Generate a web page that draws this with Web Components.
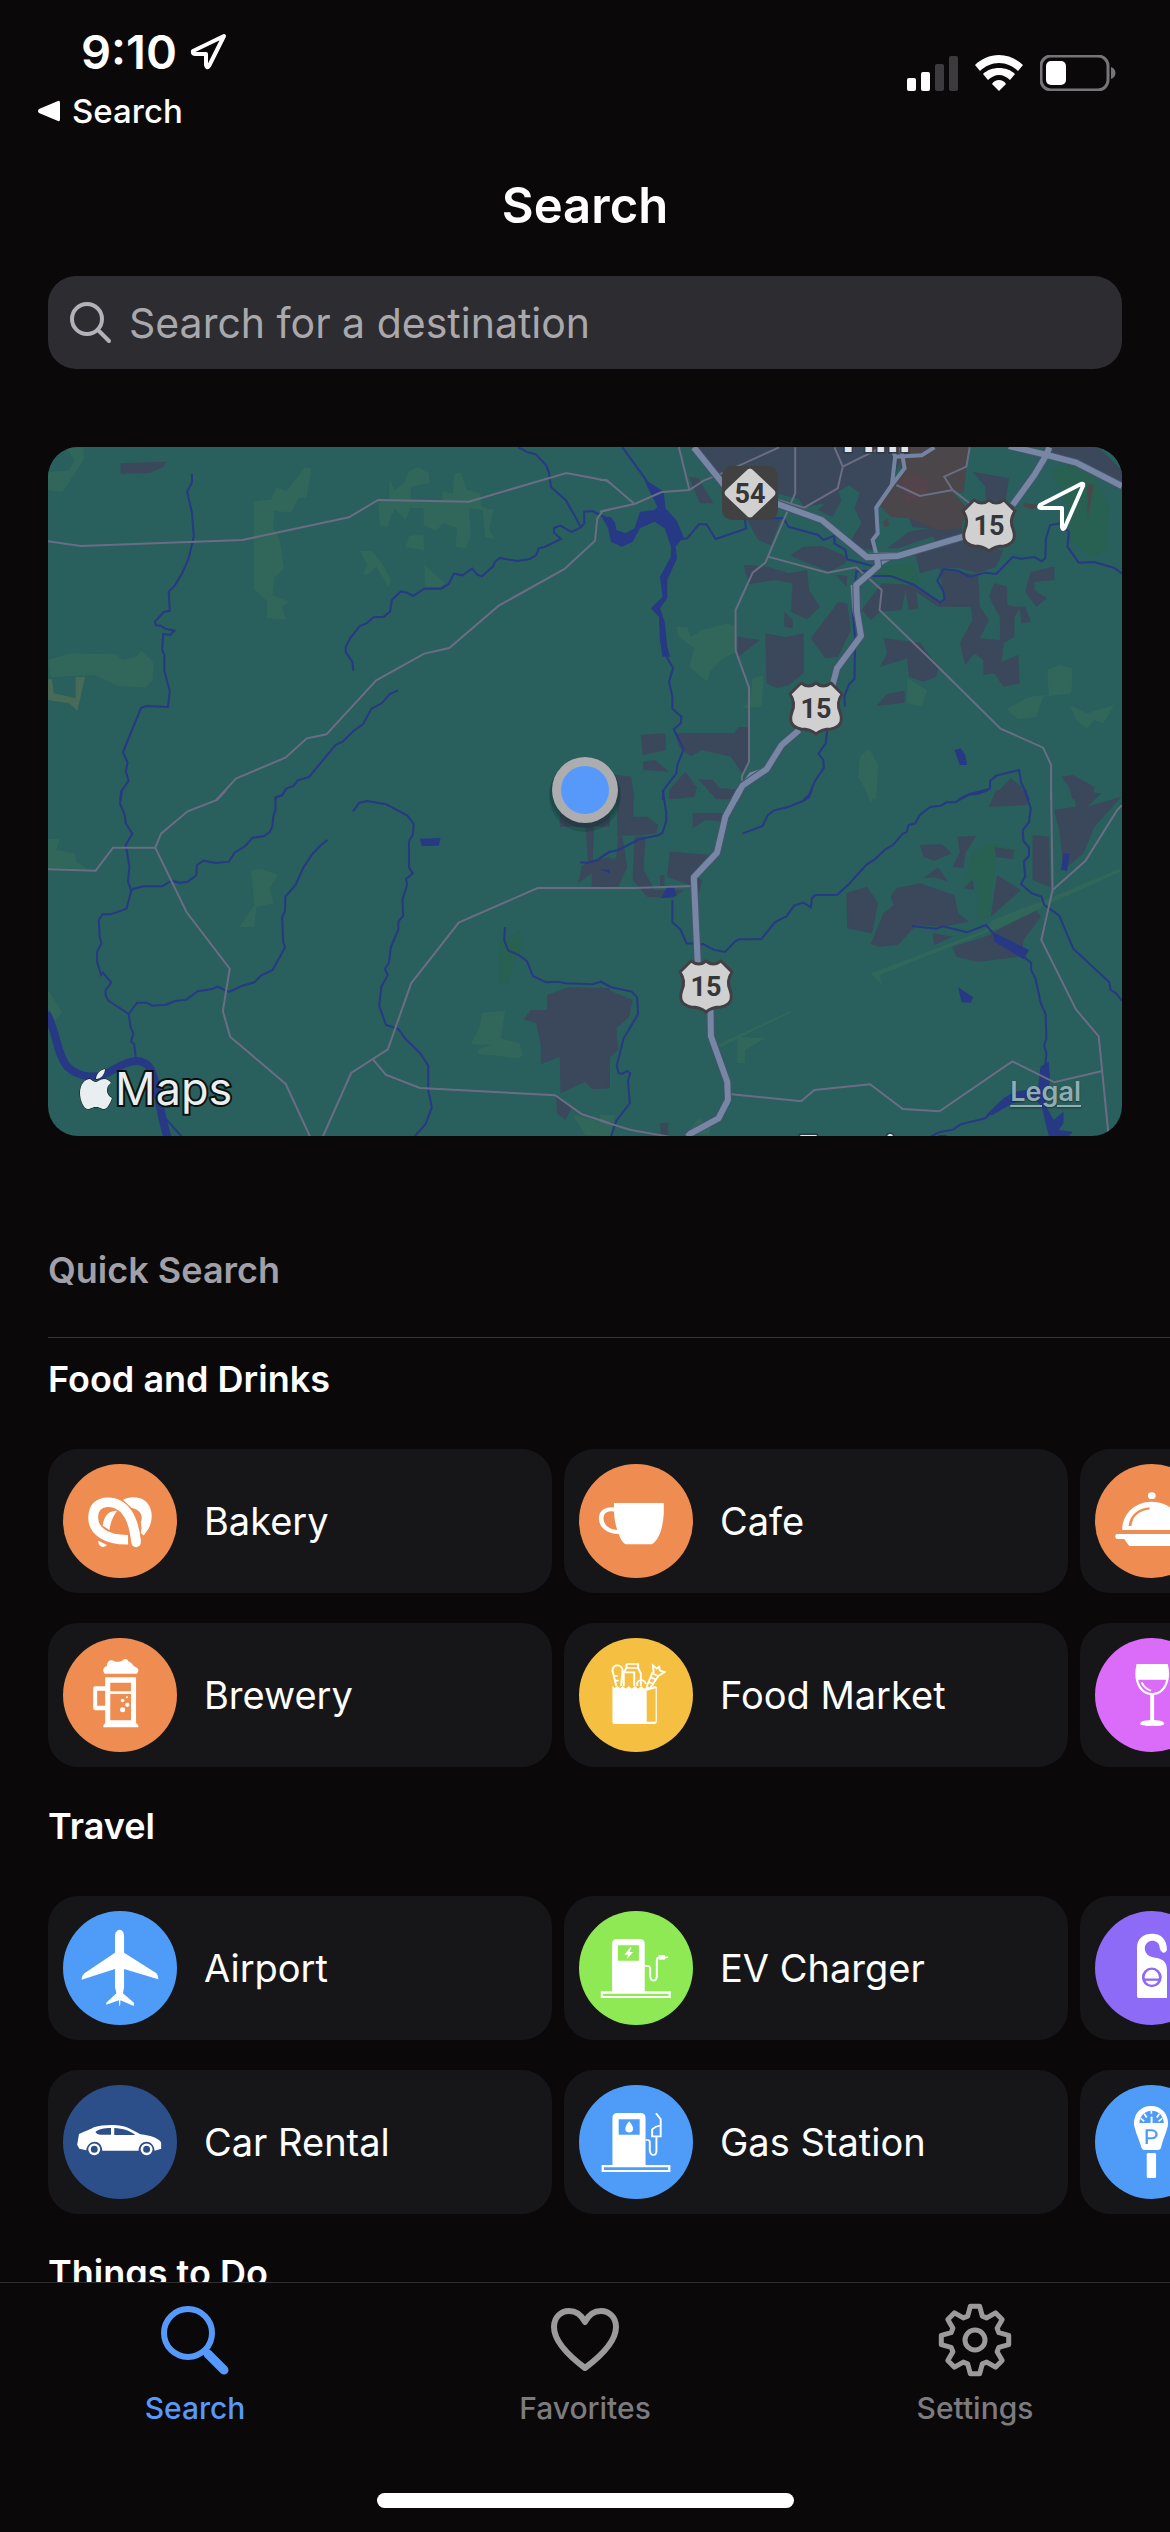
<!DOCTYPE html>
<html lang="en">
<head>
<meta charset="utf-8">
<meta name="viewport" content="width=device-width, initial-scale=1">
<title>Search</title>
<style>
  html, body { margin: 0; height: 100%; }
  body {
    background: #0a0809; color: #fff;
    font-family: Inter, "Liberation Sans", sans-serif;
    --gutter: 48px; --card: #161618; --accent: #5799fb;
  }
</style>
</head>
<body>
<app-shell>
  <status-bar slot="top" time="9:10" back="Search"></status-bar>
  <page-title slot="top">Search</page-title>
  <search-field placeholder="Search for a destination"></search-field>
  <map-card></map-card>
  <list-heading>Quick Search</list-heading>
  <place-group heading="Food and Drinks">
    <place-chip icon="bakery" color="#ef8c51">Bakery</place-chip>
    <place-chip icon="cafe" color="#ef8c51">Cafe</place-chip>
    <place-chip icon="restaurant" color="#ef8c51"></place-chip>
    <place-chip icon="brewery" color="#ef8c51">Brewery</place-chip>
    <place-chip icon="market" color="#f5c042">Food Market</place-chip>
    <place-chip icon="winery" color="#db6cf9"></place-chip>
  </place-group>
  <place-group heading="Travel">
    <place-chip icon="airport" color="#4f9cf8">Airport</place-chip>
    <place-chip icon="charger" color="#8fe955">EV Charger</place-chip>
    <place-chip icon="hotel" color="#8d6bf7"></place-chip>
    <place-chip icon="car" color="#2d4f89">Car Rental</place-chip>
    <place-chip icon="gas" color="#4f9cf8">Gas Station</place-chip>
    <place-chip icon="parking" color="#4f9cf8"></place-chip>
  </place-group>
  <place-group heading="Things to Do"></place-group>
  <tab-bar slot="bottom">
    <tab-item icon="search" active>Search</tab-item>
    <tab-item icon="heart">Favorites</tab-item>
    <tab-item icon="gear">Settings</tab-item>
  </tab-bar>
</app-shell>

<script>
const define = (name, render) => customElements.define(name, class extends HTMLElement {
  connectedCallback() {
    if (this.shadowRoot) return;
    const t = document.createElement('template');
    t.innerHTML = render(this);
    this.attachShadow({ mode: 'open' }).append(t.content.cloneNode(true));
  }
});

/* ---------- category glyphs, drawn on a 114 x 114 disc ---------- */
const at = (sx, sy, x, y, body) => `<g transform="scale(${sx} ${sy}) translate(${-x} ${-y})">${body}</g>`;
const GLYPHS = {
  bakery: at(.3635, .3571, 63, 655, `
    <path fill="none" stroke="#fff" stroke-width="27" d="M242 867C185 868 146 845 146 805C146 778 160 762 186 762C232 762 257 805 264 872"/>
    <circle cx="264" cy="875" r="13"/>
    <path d="M228 755C245 745 275 745 290 759C312 780 310 812 299 835L285 855L277 848L279 835L277 818C285 798 274 782 252 778Z"/>
    <path d="M172 828C176 800 188 786 212 786C200 802 193 820 191 840Z"/><path d="M160 870L184 882C175 892 160 888 160 870Z"/>`),
  brewery: at(.3635, .3571, 63, 1142, `
    <path d="M178 1242C170 1234 174 1224 184 1220C184 1206 194 1201 204 1207C214 1210 220 1208 227 1205C232 1199 240 1200 243 1208C254 1212 254 1218 260 1222C272 1226 273 1236 266 1242Z"/>
    <path fill-rule="evenodd" d="M179 1252H264V1380L270 1386V1392H174V1386L179 1380V1344H152Q146 1344 146 1338V1283Q146 1277 152 1277H179ZM193 1267V1291H250V1267ZM193 1299V1372H250V1299ZM157 1290V1332H179V1290Z"/>
    <circle cx="227" cy="1317" r="5"/><circle cx="239" cy="1308" r="3"/><circle cx="240" cy="1329" r="6"/><circle cx="227" cy="1343" r="7"/>`),
  cafe: at(.389, .3333, 49, 102, `
    <path d="M139 219H267V250C264 300 254 330 236 343H168C160 336 154 324 150 308C140 280 138 250 139 219Z"/>
    <path fill="none" stroke="#fff" stroke-width="12" d="M142 239C120 235 106 245 106 265C106 290 125 306 152 306"/>`),
  restaurant: at(.389, .3333, 1375, 102, `
    <ellipse cx="1521" cy="197" rx="10" ry="10"/>
    <path d="M1445 300V292C1448 250 1478 215 1521 215C1564 215 1594 250 1597 292V300Z"/>
    <path fill="none" stroke="#ef8c51" stroke-width="7" d="M1465 288C1468 256 1488 238 1515 235"/>
    <path d="M1430 312H1612Q1616 320 1612 327H1595L1580 348H1463L1450 327H1430Q1424 320 1430 312Z"/>`),
  market: at(.389, .3333, 50, 624, `
    <path fill-rule="evenodd" d="M136 768L142 774L148 768L156 774L163 768L170 776L178 768L186 776L194 768L202 776L210 768L218 776L226 768L234 776L242 768L250 770V874Q250 882 243 882H140Q136 882 136 876ZM224 782V875H247V775Z"/>
    <g fill="none" stroke="#fff" stroke-width="5">
      <path d="M146 768L136 722C136 700 162 702 162 722L158 768M141 738H150M144 752H152M172 702H202V714L209 730V768M172 702V714L165 728V768M174 714H200M165 727H192V768M200 768C196 748 218 744 222 762M224 770L238 730L254 738L232 776M234 742L246 748M230 756L240 762M242 730L240 706L250 716L256 710L258 722L270 726L254 738"/>
    </g>`),
  winery: at(.389, .3333, 1375, 624, `
    <path fill-rule="evenodd" d="M1482 702H1562C1572 745 1560 790 1527 795V870C1545 871 1553 876 1553 881C1550 887 1540 888 1522 888C1504 888 1494 887 1491 881C1491 876 1500 871 1517 870V795C1484 790 1472 745 1482 702ZM1486 749C1490 772 1503 789 1522 789C1541 789 1554 772 1558 749Z"/>
    <path fill="none" stroke="#fff" stroke-width="5" d="M1495 757C1500 770 1508 778 1519 782"/>`),
  airport: at(.3635, .3333, 63, 393, `
    <path d="M219 449C226 449 231 458 231 468V518L320 580Q326 588 325 598L231 567V622L228 640L258 668V678L221 661L220 678H218L217 661L182 674V668L210 640L206 622V567L114 599Q115 586 122 580L206 518V468C206 458 212 449 219 449Z"/>`),
  car: at(.3635, .3333, 63, 915, `
    <path fill-rule="evenodd" d="M102 1094L107 1062C125 1054 135 1050 148 1042C180 1032 225 1032 250 1048L276 1063C305 1066 328 1076 333 1088V1106L315 1112C312 1075 272 1078 271 1112H171C170 1075 130 1078 127 1111L108 1106ZM152 1056Q156 1064 165 1064H195V1044C175 1044 160 1048 152 1056ZM204 1044V1065H262C248 1052 228 1045 204 1044Z"/>
    <g fill="none" stroke="#fff" stroke-width="7"><ellipse cx="149" cy="1108" rx="13" ry="14"/><ellipse cx="293" cy="1108" rx="13" ry="14"/></g>`),
  charger: at(.389, .3333, 49, 123, `
    <path fill-rule="evenodd" d="M134 364V222Q134 207 147 207H205Q218 207 218 222V364H285V384H105V364ZM149 226V272H203V226ZM111 371V378H279V371Z"/>
    <path d="M181 232L166 254H175L172 268L188 246H179L184 232Z"/>
    <path fill="none" stroke="#fff" stroke-width="5" d="M218 288H226Q232 288 232 296V320Q234 332 241 332Q249 330 249 320V272Q249 262 256 262H278"/>
    <path d="M254 255H270V269H254Z"/>`),
  gas: at(.389, .3333, 50, 645, `
    <path fill-rule="evenodd" d="M136 885V744Q136 729 149 729H208Q221 729 221 744V885H285V906H108V885ZM152 748V794H206V748ZM114 892V900H279V892Z"/>
    <path d="M179 754C186 764 189 770 189 777C189 791 169 791 169 777C169 770 172 764 179 754Z"/>
    <g fill="none" stroke="#fff" stroke-width="5"><path d="M221 810H227Q232 810 232 817V842Q234 855 241 855Q249 854 249 842V800M238 799V778L248 770L260 766V799ZM260 768V748L248 730"/></g>`),
  hotel: at(.389, .3333, 1375, 123, `
    <path d="M1483 380V232C1483 205 1500 191 1522 191C1545 191 1560 208 1560 240Q1556 250 1550 248Q1543 245 1541 232C1540 205 1504 205 1503 235C1503 252 1515 262 1530 263C1552 266 1560 280 1560 300V384H1486Z"/>
    <g fill="none" stroke="#8d6bf7" stroke-width="7"><ellipse cx="1521" cy="322" rx="22" ry="26"/><path d="M1499 329H1543"/></g>`),
  parking: at(.389, .3333, 1375, 645, `
    <path fill-rule="evenodd" d="M1519 708C1545 708 1563 730 1563 762C1560 785 1550 805 1545 832Q1544 840 1538 840H1501Q1495 840 1494 832C1488 805 1478 785 1475 762C1475 730 1493 708 1519 708ZM1489 759H1552C1550 710 1492 710 1489 759Z"/>
    <path d="M1518 740H1523V760H1518ZM1518 722H1522V731H1518ZM1500 733L1503 730L1510 741L1506 744ZM1539 730L1542 733L1536 744L1532 741ZM1491 746L1494 743L1503 752L1500 756ZM1549 746L1547 743L1537 752L1540 756Z"/>
    <path fill="none" stroke="#4f9cf8" stroke-width="6" d="M1508 822V781H1521C1537 781 1537 805 1521 805H1508"/>
    <rect x="1508" y="849" width="24" height="75" rx="4"/>`)
};
const gear = (() => {
  const p = [], c = 37, n = 8;
  for (let i = 0; i < n; i++) for (const [o, r] of [[-17, 25], [-8, 34], [8, 34], [17, 25]]) {
    const a = (i * 45 + o - 90) * Math.PI / 180;
    p.push((c + r * Math.cos(a)).toFixed(1) + ' ' + (c + r * Math.sin(a)).toFixed(1));
  }
  return 'M' + p.join('L') + 'Z';
})();
const TABS = {
  search: '<circle cx="30" cy="30" r="24"/><path stroke-width="9" d="M50 51L66 67"/>',
  heart: '<path d="M37 65C21 53 6 39 6 24C6 14 13 8 21 8C29 8 34 13 37 19C40 13 45 8 53 8C61 8 68 14 68 24C68 39 53 53 37 65Z"/>',
  gear: `<g stroke-width="5"><path d="${gear}"/><circle cx="37" cy="37" r="10"/></g>`
};

define('app-shell', () => `
  <style>
    :host { display: flex; flex-direction: column; height: 100vh; overflow: hidden; }
    main { flex: 1; min-height: 0; overflow: auto; scrollbar-width: none; padding-top: 8px; }
  </style>
  <slot name="top"></slot><main><slot></slot></main><slot name="bottom"></slot>`);

define('status-bar', el => `
  <style>
    :host { display: flex; justify-content: space-between; align-items: flex-start; height: 144px; box-sizing: border-box; padding: 26px 54px 0 37px; }
    .left { display: flex; flex-direction: column; }
    .time { display: flex; align-items: center; gap: 12px; padding-left: 44px; font-size: 47px; line-height: 52px; font-weight: 600; }
    a { display: flex; align-items: center; gap: 12px; color: inherit; text-decoration: none; font-size: 33px; line-height: 66px; font-weight: 500; }
    .right { display: flex; align-items: center; gap: 17px; padding-top: 29px; }
    svg { display: block; }
  </style>
  <div class="left">
    <div class="time"><span>${el.getAttribute('time')}</span>
      <svg width="38" height="38" viewBox="0 0 38 38" fill="none" stroke="#fff" stroke-width="4" stroke-linejoin="round"><path d="M35 3L4 18Q3 21 6 21H17V32Q18 36 20 33Z"/></svg></div>
    <a href="#back"><svg width="23" height="22" viewBox="0 0 23 22" fill="#fff"><path d="M21 1Q23 0 23 3V19Q23 22 21 21L2 13Q0 11 2 9Z"/></svg><span>${el.getAttribute('back')}</span></a>
  </div>
  <div class="right">
    <svg width="51" height="36" viewBox="0 0 51 36" fill="#fff"><rect y="23" width="9" height="13" rx="2"/><rect x="14" y="17" width="9" height="19" rx="2"/><g fill="#3c3a3d"><rect x="28" y="9" width="9" height="27" rx="2"/><rect x="42" y="1" width="9" height="35" rx="2"/></g></svg>
    <svg width="48" height="36" viewBox="0 0 48 36" fill="#fff"><path d="M24 0C33 0 42 4 48 10L43 16C38 11 31 8 24 8C17 8 10 11 5 16L0 10C6 4 15 0 24 0Z"/><path d="M24 13C30 13 36 15 40 19L35 25C32 22 28 20 24 20C20 20 16 22 13 25L8 19C12 15 18 13 24 13Z"/><path d="M24 25C27 25 29 26 31 29L24 36L17 29C19 26 21 25 24 25Z"/></svg>
    <svg width="76" height="36" viewBox="0 0 76 36"><rect x="1" y="1" width="67" height="34" rx="10" fill="none" stroke="#767478" stroke-width="3"/><rect x="6" y="6" width="20" height="24" rx="5" fill="#fff"/><path d="M71 12C77 14 77 22 71 24Z" fill="#767478"/></svg>
  </div>`);

define('page-title', () => `
  <style>
    :host { display: block; }
    h1 { margin: 0; text-align: center; font-size: 49px; line-height: 124px; font-weight: 600; }
  </style><h1><slot></slot></h1>`);

define('search-field', el => `
  <style>
    :host { display: block; padding: 0 var(--gutter) 78px; }
    label { display: flex; align-items: center; gap: 17px; height: 93px; padding: 0 22px; border-radius: 28px; background: #2d2c31; }
    input { flex: 1; min-width: 0; border: 0; padding: 0; background: none; outline: 0; color: #fff; font: 400 41px/60px Inter, "Liberation Sans", sans-serif; }
    input::placeholder { color: #a9a8ac; opacity: 1; }
  </style>
  <label><svg width="42" height="42" viewBox="0 0 42 42" fill="none" stroke="#b3b2b8" stroke-width="4" stroke-linecap="round"><circle cx="17" cy="17" r="15"/><path d="M28 28L39 39"/></svg>
  <input type="search" aria-label="${el.getAttribute('placeholder')}" placeholder="${el.getAttribute('placeholder')}"></label>`);

/* ---------- map: four tiles of vector features ---------- */
const TILE = { a: [-8, -7], b: [552, -7], c: [-8, 343], d: [552, 343] };
const layer = (attrs, tiles) => Object.entries(tiles).map(([k, ds]) =>
  `<g transform="matrix(.3635 0 0 .3333 ${TILE[k]})" ${attrs}>${ds.map(d => `<path d="M${d}" vector-effect="non-scaling-stroke"/>`).join('')}</g>`).join('');
const fields = {
  a: ['22 95L80 92L95 60L70 22H120L122 55L62 157L22 150Z',
    '588 183L637 178L650 142L678 153L728 82L747 85L733 172L712 175L690 218L644 212L642 265L660 300L672 388L645 412L640 465L686 486L665 500L676 538L624 535V483L588 448Z',
    '930 190L960 180L962 115L975 150L1000 130L1015 95L1040 80L1070 100V130L1020 140V178L1108 180V155L1135 160L1140 100L1158 97L1175 150L1210 160L1215 200L1248 210L1235 270L1252 298L1225 292L1218 210L1180 205L1185 285L1172 325L1143 322L1148 265L1110 250L1088 272L1055 255V205H1020L1005 240L975 205L955 262L935 255Z',
    '1005 322L1015 288L1055 282L1058 375L1115 430L1100 440H1060L1055 330Z', '880 332L912 333L938 365L966 420L960 445L925 380L905 403H888L900 375Z',
    '22 660L85 640L210 643L225 660L265 650L277 630L312 665L310 720L290 743L215 738L150 705L30 712Z'],
  b: ['210 560H240L250 590L280 570L350 550L370 560V640L345 650L305 690L295 725L245 680L260 625L215 590Z', '420 715L450 705L445 800L390 805L412 780Z',
    '845 715L900 750L885 800L845 790Z', '1230 690L1265 675L1300 685L1297 760L1220 770L1200 830L1150 838L1118 808L1180 770L1235 765Z',
    '1292 795L1340 820L1415 795L1385 850L1360 840L1340 866L1310 840Z', '715 950L740 925L765 975L760 1078H745L710 1010Z'],
  c: ['22 148L55 145L45 180L95 190L100 215L130 237L22 235Z', '580 240L610 237L655 255L632 295L642 340L595 352L590 410L548 412L590 345Z', '22 600L62 668L40 690L22 655Z',
    '1215 668L1280 662L1268 745L1320 760L1328 795L1318 805L1205 792V778L1240 765L1185 763L1210 710Z', '1465 975L1568 1000V1040L1500 1035Z'],
  d: ['745 550L1060 420L1080 390L1150 360L1225 330L1432 235V245L1240 340L1100 415L1060 428L770 555L775 585Z', '320 765L525 662V668L335 770Z',
    '378 740L455 745L400 780L398 820H378Z', '0 975H40L30 1040H0Z', '240 1030L270 985L305 1005L300 1035Z', '730 0H765L745 38Z']
};
const woods = { c: ['1265 455L1320 425L1325 480L1300 520L1285 585L1262 580Z'],
  d: ['1025 190L1070 160L1150 180L1140 210L1090 190L1070 380L1040 390L1035 260L1000 290Z'],
  b: ['1240 90L1340 60L1400 200L1390 330L1350 350L1290 300L1290 200Z', '750 385L860 370L880 430L800 430Z'] };
const urban = {
  a: ['222 70L348 65L338 82L300 99L222 101Z'],
  b: ['262 22H838L800 140L760 205L765 285L748 330L700 320L690 300L720 250L700 205L715 160L685 135L655 155L665 180L640 230L600 210L620 190L560 200L545 175L480 160L400 90L330 115Z',
    '1240 22H1370L1436 90V130L1310 75L1240 45Z', '1025 95L1125 115L1115 190L1060 175V140Z', '830 330L1000 290L1040 320L1110 330L1090 380L1040 400L990 385H930L880 400L870 350Z',
    '790 325L850 275L905 265L925 285L820 325Z', '850 235L930 268L995 265L1000 292L925 310L905 265L860 262Z',
    '935 385L1040 405L1045 500L1070 540L1045 595L1100 600V530L1070 470L1085 430L1120 440V495L1140 500V590L1110 610L1105 665L1150 645L1155 730L1110 740L1085 700L1055 705V660L1030 640L1005 675L990 610L1025 540L1020 500H930L870 455L875 505L850 510L840 450L830 510L770 515L745 540L720 510L775 430L860 435L930 485L945 480Z',
    '1130 500H1170L1185 545L1160 550L1155 505L1130 550Z', '1170 455L1185 395L1250 380V420L1195 425V450L1230 475L1200 500Z', '525 345L560 320L610 318L680 350L675 370L630 395L530 350Z',
    '395 375L460 380L520 400L570 390L575 450L605 500L570 538L525 515L530 430L480 420L410 432Z', '580 595L655 487L680 490L690 570L655 650L620 655Z',
    '455 580L510 592L560 580V700L520 735L487 745L458 730Z', '507 515L530 540V565L507 560Z', '378 590L440 600L380 650Z',
    '780 595L880 608L932 685L925 710L890 725L850 710L845 655L770 680L790 640Z', '760 798L790 762L838 752V788Z', '245 110L270 115L312 190H275Z', '405 240L500 230L470 315L435 300Z',
    '205 880H370L380 862H408L410 970L390 1000L360 950L280 930L250 948L220 925Z', '112 885L180 880L182 930L118 945Z', '118 965L150 960L190 995L120 990Z',
    '190 1050L235 995L268 1045L230 1075H195Z', '270 1018L310 1020L330 1045L372 1048L360 1078H320Z', '0 1000L85 1010L95 1078H0Z',
    '1270 1010L1300 1005L1360 1040L1355 1078H1300L1290 1040Z', '1090 1060L1130 1015L1160 1040L1165 1078H1085Z', '650 405L680 408L678 440Z'],
  c: ['1395 615L1455 592L1568 595V895L1518 897L1500 875L1432 910L1430 800L1378 822V765L1365 700L1330 688L1350 660H1395Z', '1420 918L1462 955L1445 990L1422 970Z',
    '1430 70H1568V110H1430Z', '1500 100H1525L1520 215L1568 200V290H1518V250L1480 280L1490 230L1508 215Z'],
  d: ['45 0H92V80H130L160 105L155 130L120 135L48 138Z', '95 140H125L120 240L150 300L230 300L200 325L130 320L90 270Z', '50 138L62 140L75 230L50 290L0 290V210L45 205Z',
    '165 255H177V290H165Z', '190 0H265L260 20L190 28Z', '310 0H385L370 30Z', '255 70H345L340 95L290 90L255 115Z', '192 185L250 190L310 195L262 260L280 270L268 335L260 290L185 260Z',
    '678 310L735 290L765 340L748 430L680 415Z', '815 295L880 280L975 315L985 370L1015 395L940 410L870 405L820 465L770 470L745 462L780 370L808 345L800 320Z',
    '880 165L940 163L968 190L920 212L890 200Z', '983 140L1035 138L1005 190L1000 235L970 230L990 185Z', '890 265L930 232L958 275L920 262Z', '1085 172L1140 180L1135 208L1090 200Z',
    '1092 255L1158 300L1075 380Z', '970 470L1060 440L1110 410L1200 362L1213 380L1165 450L1160 500L1040 515L980 500Z', '915 430L970 440L920 465Z', '1000 295L1025 270L1030 300Z',
    '1190 135L1235 140L1240 292L1190 270Z', '1250 60L1310 50L1300 0L1380 10L1340 50L1435 20L1360 110L1330 190L1275 240L1265 130Z', '1090 0H1175V45L1070 50Z',
    '0 590L90 630L80 680L45 715L50 780L20 810L22 895H0Z', '165 1000L188 998V1040L168 1035Z']
};
const lakes = {
  b: ['5 230L30 232L42 250L45 270L70 280L95 265L110 215L150 210L158 200L130 140L122 118L140 130L175 155L180 205L210 240L230 290L208 320L212 355L185 420V475L165 505L178 545L185 620L193 650H172L165 600L162 530L140 505L172 470L165 410L195 350V320L178 265L150 245L110 265L90 305L60 320L30 305L22 265Z',
    '975 930L992 925L1005 945L1010 975H990Z'],
  c: ['1045 146L1102 144L1097 167L1050 168Z', '1568 240V250L1540 238Z'],
  d: ['185 290L205 295L210 318L168 325Z', '1080 425L1180 480L1165 508L1085 455Z', '1275 190L1292 192L1285 242L1268 240Z', '985 592L1027 622L1020 638L995 637Z',
    '1212 830L1235 815L1238 870L1225 945L1248 990L1275 965V1000L1262 1020L1300 1025L1290 1040H1235L1215 950L1190 920L1135 940L1080 975H1062L1110 925L1140 905L1205 895Z']
};
const streams = {
  a: ['418 101V127L405 155L418 218L423 290L409 355L390 402L370 438L354 455L357 512L341 516L316 545L319 556L332 557L344 566L370 572L358 585L339 582L336 630L342 645V692L357 754L352 801L292 798L278 804L228 937L241 967L236 995L244 1022L223 1055L221 1080',
    '985 751L962 762L940 790L912 806L889 852L862 873L832 906L814 914L740 1011L708 1022L698 1038L677 1046L666 1066L648 1073V1080',
    '862 692L859 665L841 636V622L853 595L880 558L900 549L917 532L946 530L963 515L968 480L993 454L1010 458L1026 468L1057 446H1104L1124 432L1139 401L1162 406L1189 386L1202 403L1216 409L1248 377L1251 366L1264 354L1314 363L1347 357L1365 345L1372 325L1388 321L1433 297L1414 278V264L1431 257L1462 276L1488 262L1497 250V215L1520 213L1568 240',
    '1316 22L1340 36L1364 43L1392 75L1400 97L1406 142L1446 180L1470 225L1488 262'],
  b: ['62 22L130 125', '183 650L201 684L190 725L199 770V806L224 830L222 850L203 868L230 928L213 975L210 1000L175 1050L172 1080',
    '208 300L240 295L272 253H293L318 297L402 266L398 235L505 235L518 260L600 285L615 300L645 287V310L675 330L680 358L750 378L760 385',
    '740 408H800L865 435L935 487L948 478L945 455L928 422L945 387L985 392L1017 411L1060 398L1090 402L1135 351L1158 356L1195 351L1215 364L1225 355L1227 295L1238 256L1265 250L1290 275L1286 320L1317 368L1360 366L1415 384L1436 400',
    '740 392L705 394L695 515L702 600L700 717L685 733L672 770L674 800', '625 872L621 910L601 941L614 960L616 983L592 1022L575 1065L560 1080',
    '985 1080L1015 1063L1073 1046V1023L1090 1007L1153 990L1158 1025L1180 1080'],
  c: ['226 0L220 40L233 75L236 100L254 131L236 165L246 230L242 275L251 302L238 356L194 373H172L162 390L164 440L169 460L157 485V515L168 555L173 548L196 578L180 602L181 617L188 632L244 672L249 712L257 731L250 755L259 762L264 808',
    '251 302L258 296L285 289H336L362 272L384 278L405 276L430 256L432 225L450 212L484 219L520 215L535 188L565 168L585 143L615 139L632 126L639 110L642 78L648 60V22L667 15L676 0',
    '791 150L772 166L748 194L725 232L703 285L675 320L674 362L666 382L669 455L674 472L640 540L608 557L590 577L555 588L520 606L488 590L474 597L434 604L403 629L371 633L347 644L309 647L293 638H267L244 672',
    '861 64L878 39L900 33L952 43L1010 76L1028 102L1026 133L1015 155V232L1026 250L1007 267L1010 285L997 330L999 378L986 394V418L965 472L960 518L949 538L957 555L939 590L933 648L952 705L986 717L1004 745L1046 790L1068 827V900L1078 952L1061 1002L1030 1040',
    '1279 411L1277 450L1288 481L1318 496L1340 514L1356 558L1392 577L1425 575L1445 580L1520 583L1544 575L1568 590', '1486 217L1505 219L1532 211L1568 184', '345 985L390 1040'],
  d: ['583 0L575 22L558 33L515 52L479 61L462 75L447 108L392 131', '172 0L182 65V95L172 128L160 136L110 147L50 180L27 186L0 204',
    '1068 0L1040 11L1015 14L977 37H953L938 47L908 51L880 75L867 100L849 105L843 127L833 131L806 165L784 179L755 209L734 223L685 282L652 315H592L583 325L580 352L560 338L534 347L513 379L482 396L444 447L383 448L372 454L344 486L312 479L285 463L238 460L221 418L199 397V330',
    '858 408L925 416L943 409L1010 427L1062 405L1090 440', '1165 500L1186 518V540L1198 566L1205 600L1212 638L1226 673L1228 745L1222 767L1228 790L1225 830',
    '1070 975L1060 985L992 1003L972 1019L935 1026L910 1040',
    '1168 0L1185 55L1180 98L1163 120L1165 153L1180 172V198L1166 215L1170 258L1158 282L1188 310L1215 320L1222 345L1263 376L1302 476L1401 577L1405 600L1420 610L1436 633',
    '0 575L32 592L87 605L102 622L105 672L65 745L46 827L51 849L60 852L76 843L83 850L77 872L82 940L45 992L30 1040']
};
const river = { c: ['18 670C45 720 45 790 75 830C110 865 160 870 200 840C240 815 275 800 300 830C325 870 325 960 352 1046'] };
const minor = {
  a: ['22 304L112 318L557 300L850 232L930 180L1180 185L1448 99L1560 122L1568 130', '485 1080L539 1016L675 953L734 895L788 883L925 721L1057 641L1126 624L1262 497L1443 387L1527 302L1533 236L1548 213L1568 209'],
  b: ['0 215L10 212L95 192L170 156L246 150L285 122L340 98L493 22', '217 22L246 150', '0 120H18L95 192',
    '537 22V160L519 205L462 350L455 368L420 398L373 510V632L410 742V965L390 1010L392 1030', '462 350L625 398L705 382L775 450L769 510L925 675L1102 866L1219 923L1241 975V1080',
    '645 22L668 80L654 145L562 203L490 180', '668 80L775 22', '1017 22L1008 80L947 110L970 150L1017 190', '815 135L880 168L970 150'],
  c: ['512 0L487 30L406 64L333 131L317 173H201L153 242L22 238', '317 173L403 366L522 536L503 663L523 740L676 882L743 1040',
    '778 1040L856 849L957 778L1021 580L1152 398L1369 294H1568', '915 807L951 854L1045 894L1417 916L1491 973L1568 1000'],
  d: ['0 294H95L258 288', '1241 0L1245 300L1214 450L1309 658L1372 739L1398 1025', '1245 300L1335 213L1423 60L1436 46',
    '355 912L553 934L590 900L743 883L833 957L934 964L1134 814L1250 877L1382 843', '0 992L85 1020L190 1040']
};
const town = { b: ['803 22L812 50L803 135L760 203L764 280L750 300L762 350', '828 22L838 85L803 135', '812 50L885 46L920 22', '735 345L815 342L765 375', '392 1037L415 1003L458 988', '695 435L700 515L718 588'] };
const major = {
  b: ['258 22L345 140L420 165L610 240L735 352L820 348L1000 290', '1135 195L1195 105L1228 45L1236 22', '1125 18L1230 45L1310 68L1436 138',
    '762 350L765 378L705 435L707 515L718 588L652 685L640 735', '548 870L500 915L458 988L392 1037L370 1080'],
  d: ['385 0L345 80L322 188L258 262L269 520', '304 660L305 738L350 875L352 930L326 985L250 1030L240 1040']
};
const shield = (x, y, n) => `<g transform="translate(${x} ${y})">
  <path d="M-15 -25Q-7 -19 0 -25Q7 -19 15 -25L26 -14Q20 -5 24 4Q29 18 15 21Q6 21 0 26Q-6 21 -15 21Q-29 18 -24 4Q-20 -5 -26 -14Z" fill="#d0d0d0" stroke="#424044" stroke-width="3" stroke-linejoin="round"/>
  <text y="10" class="num">${n}</text></g>`;

define('map-card', () => `
  <style>
    :host { display: block; position: relative; margin: 0 var(--gutter); border-radius: 30px; overflow: hidden; background: #295f5c; }
    .map { display: block; width: 100%; height: auto; }
    .num { font: 700 27px Roboto, sans-serif; fill: #363638; text-anchor: middle; }
    .place { font: 700 44px Inter, sans-serif; fill: #e0e7ec; stroke: #2c3a46; stroke-width: 3; paint-order: stroke; }
    .village { font-size: 34px; }
    button { position: absolute; top: 34px; right: 36px; padding: 0; border: 0; background: none; }
    button svg, .brand svg { display: block; overflow: visible; }
    footer { position: absolute; left: 31px; right: 41px; bottom: 17px; display: flex; justify-content: space-between; align-items: flex-end; }
    .brand { display: flex; align-items: center; gap: 2px; color: #e9eff0; font-size: 45px; line-height: 60px; font-weight: 400; -webkit-text-stroke: 4px #08110f; paint-order: stroke; }
    a { color: #91adb2; font-size: 27px; line-height: 54px; font-weight: 600; text-underline-offset: 4px; text-shadow: 0 1px 2px #0006; }
  </style>
  <svg class="map" viewBox="0 0 1074 689" role="img" aria-label="Map">
    ${layer('fill="#31665b"', fields)}${layer('fill="#28604f" opacity=".8"', woods)}
    ${layer('fill="#476b57"', { a: ['22 718H33L38 760L98 775V712L124 710L103 813L80 790L22 780Z'] })}
    ${layer('fill="#3b475b"', urban)}
    ${layer('fill="#4a464a"', { b: ['815 22H1015L1000 160L970 155L1005 200L995 265L930 270L850 235L800 230L768 195L830 95Z', '1165 190L1215 195L1190 208L1165 200Z', '1340 130L1358 135L1342 230Z', '778 245L790 235L795 255L785 262Z'] })}
    ${layer('fill="#54434b"', { b: ['830 115L870 100L905 125L900 160L840 190Z'] })}
    ${layer('fill="#273984"', lakes)}
    ${layer('fill="none" stroke="#273984" stroke-width="2"', streams)}${layer('fill="none" stroke="#273984" stroke-width="8"', river)}
    ${layer('fill="none" stroke="#6b6d84" stroke-width="2"', minor)}
    ${layer('fill="none" stroke="#7483a1" stroke-width="4"', town)}
    ${layer('fill="none" stroke="#46536d" stroke-width="8" stroke-linejoin="round"', major)}
    ${layer('fill="none" stroke="#7786a3" stroke-width="6" stroke-linejoin="round"', major)}
    <rect x="674" y="19" width="56" height="54" rx="10" fill="#414142"/>
    <path d="M698 24Q702 19 706 24L725 42Q730 46 725 50L706 68Q702 73 698 68L679 50Q674 46 679 42Z" fill="#d0d0d0"/><text x="702" y="56" class="num">54</text>
    ${shield(941, 78, 15)}${shield(768, 261, 15)}${shield(658, 539, 15)}
    <text x="794" y="5" class="place">Hill</text><text x="750" y="713" class="place village">Fearrington</text>
    <circle cx="537" cy="349" r="36" fill="#0a2a2c" opacity=".2"/><circle cx="537" cy="346" r="35" fill="#0a2a2c" opacity=".25"/>
    <circle cx="537" cy="343" r="33" fill="#adadb0"/><circle cx="537" cy="343" r="24" fill="#5799fb"/>
  </svg>
  <button aria-label="Show my location"><svg width="50" height="50" viewBox="0 0 50 50" fill="none" stroke="#fff" stroke-width="4" stroke-linejoin="round"><path d="M47 5Q48 2 45 3L4 24Q2 27 5 27H26V46Q27 50 29 46Z"/></svg></button>
  <footer>
    <span class="brand"><svg width="34" height="42" viewBox="0 0 34 42" fill="#e9eff0" stroke="#08110f" stroke-width="1"><path d="M26 1C26 6 22 11 17 11C17 6 21 2 26 1Z"/><path d="M17 14C19 14 21 11 25 11C28 11 31 13 32 15C26 19 27 27 33 30C31 36 28 41 25 41C22 41 21 39 17 39C13 39 12 41 9 41C5 41 1 33 1 25C1 16 6 11 11 11C13 12 15 14 17 14Z"/></svg><span>Maps</span></span>
    <a href="#legal">Legal</a>
  </footer>`);

define('list-heading', () => `
  <style>
    :host { display: block; margin-left: var(--gutter); padding: 112px 0 45px; border-bottom: 1px solid #363538; }
    h2 { margin: 0; color: #a1a0a8; font-size: 36px; line-height: 44px; font-weight: 600; }
  </style><h2><slot></slot></h2>`);

define('place-group', el => `
  <style>
    :host { display: block; padding: 19px 0 18px var(--gutter); }
    h3 { margin: 0 0 48px; font-size: 36px; line-height: 44px; font-weight: 600; }
    .grid { display: grid; grid-template-columns: repeat(3, 504px); gap: 30px 12px; overflow: auto; scrollbar-width: none; }
  </style>
  <h3>${el.getAttribute('heading')}</h3><div class="grid"><slot></slot></div>`);

define('place-chip', el => `
  <style>
    :host { display: block; }
    button { display: flex; align-items: center; gap: 27px; width: 100%; padding: 15px; border: 0; border-radius: 30px; background: var(--card); color: #fff; text-align: left; font: 400 38px/48px Inter, "Liberation Sans", sans-serif; }
    svg { display: block; flex: none; }
  </style>
  <button aria-label="${el.textContent || el.getAttribute('icon')}"><svg width="114" height="114" viewBox="0 0 114 114" fill="#fff"><circle cx="57" cy="57" r="57" fill="${el.getAttribute('color')}"/>${GLYPHS[el.getAttribute('icon')]}</svg><slot></slot></button>`);

define('tab-bar', () => `
  <style>
    :host { display: block; border-top: 1px solid #2f2e31; background: #0a0809; }
    nav { display: grid; grid-template-columns: repeat(3, 1fr); padding: 20px 0 67px; }
    .home { width: 417px; height: 15px; margin: 0 auto 24px; border-radius: 8px; background: #fff; }
  </style>
  <nav><slot></slot></nav><div class="home"></div>`);

define('tab-item', el => `
  <style>
    :host { display: block; }
    a { display: flex; flex-direction: column; align-items: center; gap: 13px; color: #7c7b7f; text-decoration: none; font-size: 30px; line-height: 36px; font-weight: 500; }
    svg { display: block; fill: none; stroke: #9b9b9c; stroke-width: 6; stroke-linecap: round; stroke-linejoin: round; }
    :host([active]) a { color: var(--accent); }
    :host([active]) svg { stroke: var(--accent); }
  </style>
  <a href="#${el.getAttribute('icon')}"><svg width="74" height="74" viewBox="0 0 74 74">${TABS[el.getAttribute('icon')]}</svg><span><slot></slot></span></a>`);
</script>
</body>
</html>
